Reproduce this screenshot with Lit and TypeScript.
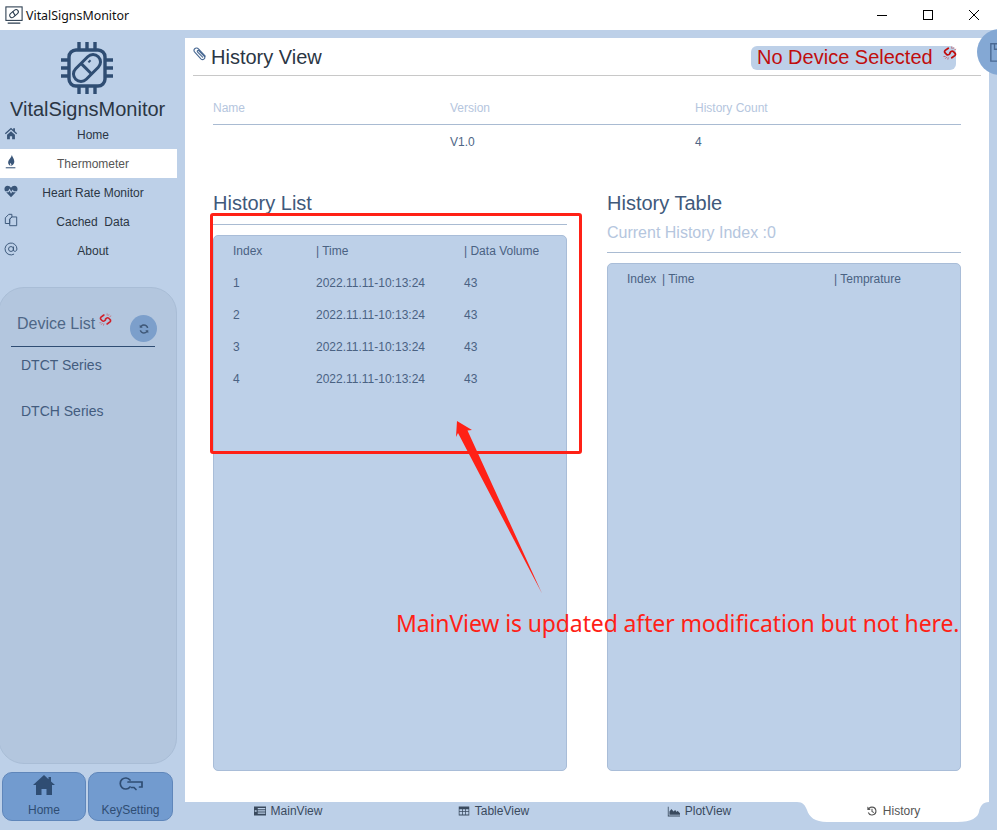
import { LitElement, css, html, svg } from 'lit';
import { customElement } from 'lit/decorators.js';

const icons = {
  home: svg`<path d="M8 2 1 8.200l1 1.100L8 4l6 5.300 1-1.100-2.500-2.200V2.500h-2v1.800zM3.500 10v5h3.200v-3.400h2.600V15h3.200v-5L8 6z"/>`,
  flame: svg`<path d="M9 0c.5 2.500 2.800 4.500 2.800 7.500 0 2.200-1.500 4.500-3.800 5 1-1.500.2-3-1.300-3.300 0 1 .4 2 .9 3.300C5.500 12 4.400 10 4.800 7.800 5.300 5 8.500 3 9 0z"/><rect x="2" y="14" width="11" height="1.200"/>`,
  heart: svg`<path d="M8 15 2.500 9.500h2.800l1-1.800 1.700 3.300 1.600-2.500.6 1h3.300zM1.300 8.300C-.5 5.500 1 2 4 2c1.800 0 3 1 4 2.200C9 3 10.200 2 12 2c3 0 4.500 3.500 2.700 6.300h-3.500l-1.300-2-1.700 2.600L6.400 5.200 4.600 8.300z"/>`,
  copy: svg`<path fill="none" stroke="currentColor" stroke-width="1.100" d="M5.500 1.500h3.500v3l-2.500 2.500v5h-5V5.500zM9 4.500h5.500v10h-8V7z"/>`,
  at: svg`<g fill="none" stroke="currentColor" stroke-width="1.100"><circle cx="8" cy="8" r="2.800"/><path d="M10.800 5.200v4c0 2.200 4 2 4-1.200A6.800 6.800 0 1 0 11.500 13.800"/></g>`,
  paperclip: svg`<path fill="none" stroke="currentColor" stroke-width="1.300" stroke-linecap="round" d="M14 10.500 6.500 2.500C5 1 3 1 2 2 1 3 1 5 2.500 6.500L9 13.500c1 1 2.800 1 3.700.1.900-.9.900-2.400 0-3.300L6.800 4.300c-.5-.5-1.200-.5-1.600-.1-.4.400-.4 1.100.1 1.600L11 11.500"/>`,
  refresh: svg`<path d="M13.800 6.500h-2C11.200 4.700 9.700 3.700 8 3.700c-1.200 0-2.200.5-3 1.200L6.300 6.200H2.300V2.200l1.400 1.400C4.800 2.500 6.300 1.800 8 1.800c2.800 0 5.200 2 5.800 4.700zM2.200 9.500h2c.6 1.800 2.100 2.800 3.800 2.800 1.200 0 2.200-.5 3-1.200L9.700 9.800h4v4l-1.400-1.400c-1.100 1.100-2.600 1.800-4.300 1.800-2.800 0-5.200-2-5.800-4.700z"/>`,
  broken: svg`<g fill="none" stroke="currentColor" stroke-width="2" stroke-linecap="round"><path d="M6 2.500 2.500 5C1.500 6 1.500 7.200 2.500 8l1.500 1.500c.8.800 2 .8 3 0l1-1"/><path d="M10 13.500 13.500 11c1-1 1-2.200 0-3L12 6.500c-.8-.8-2-.8-3 0L8 7.500"/></g><g stroke="currentColor" stroke-width=".8" opacity=".7"><path d="M10 .5v2.500M12.500 1.500 11 3.500M15 3.500 13 4.500M.5 12H3M2.500 14.500 4.500 12.500M5.500 15.500l.5-2.500"/></g>`,
  list: svg`<path d="M0 2h16v12H0zm5 2v1.500h10V4zm0 3v1.500h10V7zm0 3v1.500h10V10zM1 7v2h2.500V7z" fill-rule="evenodd"/>`,
  table: svg`<path d="M1 2h14v12H1zm1 3.500V8h3.500V5.500zm4.500 0V8h3V5.500zm4 0V8H14V5.500zM2 9v3.500h3.500V9zm4.500 0v3.500h3V9zm4 0v3.500H14V9z" fill-rule="evenodd"/>`,
  chart: svg`<path d="M1 2h1v11h14v1H1zM3 12V8l2.500-3 2.500 3 2-2 2 2.500L13 7l3 3v2z"/>`,
  history: svg`<path d="M8 2a6 6 0 1 1-5.600 8.200l1.400-.5A4.500 4.500 0 1 0 4.700 5l1.500 1.500H1.800V2l1.800 1.800A6 6 0 0 1 8 2zM7.300 5h1.400v3.200l2.200 1.300-.7 1.200-2.900-1.700z"/>`,
};

const icon = (name: keyof typeof icons, size = 16) =>
  html`<svg class="icon" width=${size} height=${size} viewBox="0 0 16 16" fill="currentColor">${icons[name]}</svg>`;

const nav = ['Home', 'Thermometer', 'Heart Rate Monitor', 'Cached  Data', 'About'];
const navIcons = ['home', 'flame', 'heart', 'copy', 'at'] as const;
const rows = [1, 2, 3, 4];

@customElement('app-root')
export class AppRoot extends LitElement {
  render() {
    return html`
      <header class="titlebar">
        <svg class="app-icon" width="18" height="18" viewBox="0 0 20 20" fill="none" stroke="#2c3e50" stroke-width="1.200">
          <rect x="1" y="1" width="18" height="15"/>
          <rect x="4.500" y="6" width="11" height="5" rx="2.500" transform="rotate(-40 10 8.500)"/>
          <path d="M8.500 6l3 5M3 19h14"/>
        </svg>
        <span class="app-name">VitalSignsMonitor</span>
        <div class="win-buttons">
          <svg width="12" height="12" viewBox="0 0 12 12" stroke="#000" fill="none"><path d="M1 6.500h10"/></svg>
          <svg width="12" height="12" viewBox="0 0 12 12" stroke="#000" fill="none"><rect x="1.500" y="1.500" width="9" height="9"/></svg>
          <svg width="12" height="12" viewBox="0 0 12 12" stroke="#000" fill="none"><path d="M1 1l10 10M11 1 1 11"/></svg>
        </div>
      </header>
      <div class="body">
        <aside class="sidebar">
          <div class="logo">
            <svg width="54" height="54" viewBox="0 0 54 54" fill="none" stroke="#2f4d73">
              <g stroke-width="3.400"><path d="M19 1v8M27 1v8M35 1v8M19 45v8M27 45v8M35 45v8M1 19h8M1 27h8M1 35h8M45 19h8M45 27h8M45 35h8"/></g>
              <rect x="9" y="9" width="36" height="36" rx="7" stroke-width="3.400"/>
              <g transform="rotate(-45 27 27)" stroke-width="3">
                <rect x="11" y="19.500" width="32" height="15" rx="7.500"/>
                <path d="M26 19.500v15"/>
                <path d="M32 24h3" stroke-width="2"/>
              </g>
            </svg>
          </div>
          <div class="brand">VitalSignsMonitor</div>
          <nav class="nav">
            ${nav.map(
              (label, i) => html`<div class="nav-item ${i === 1 ? 'active' : ''}">
                <span class="nav-icon">${icon(navIcons[i], 14)}</span>
                <span class="nav-label">${label}</span>
              </div>`,
            )}
          </nav>
          <section class="devices">
            <div class="devices-head">
              <span class="devices-title">Device List</span>
              <span class="broken-small">${icon('broken', 13)}</span>
              <span class="refresh">${icon('refresh', 12)}</span>
            </div>
            <div class="series">DTCT Series</div>
            <div class="series">DTCH Series</div>
          </section>
          <div class="bottom-buttons">
            <div class="big-btn">
              <svg width="22" height="22" viewBox="0 0 22 22" fill="#2f4d73"><path d="M11 1 0 11h3v10h5.500v-6h5v6H19V11h3l-4-3.600V3h-2.500v2.200z"/></svg>
              <span>Home</span>
            </div>
            <div class="big-btn">
              <svg width="24" height="22" viewBox="0 0 24 18" fill="none" stroke="#2f4d73" stroke-width="1.700" stroke-linecap="round"><path d="M11 4A5.500 5.500 0 1 0 11 11"/><path d="M9 6h14v5h-2.500M17 13.500l-2-2h-2.500"/></svg>
              <span>KeySetting</span>
            </div>
          </div>
        </aside>
        <div class="right">
          <main class="content">
            <div class="view-head">
              <span class="clip">${icon('paperclip', 14)}</span>
              <h1>History View</h1>
              <div class="status">
                <span>No Device Selected</span>
                <span class="broken-big">${icon('broken', 14)}</span>
              </div>
            </div>
            <div class="info">
              <div class="info-row labels"><span>Name</span><span>Version</span><span>History Count</span></div>
              <div class="info-row values"><span></span><span>V1.0</span><span>4</span></div>
            </div>
            <div class="columns">
              <section class="col">
                <h2 class="single">History List</h2>
                <div class="panel list-panel">
                  <div class="row list-row"><span>Index</span><span>| Time</span><span>| Data Volume</span></div>
                  ${rows.map((n) => html`<div class="row list-row"><span>${n}</span><span>2022.11.11-10:13:24</span><span>43</span></div>`)}
                </div>
              </section>
              <section class="col">
                <h2>History Table</h2>
                <div class="subtitle">Current History Index :0</div>
                <div class="panel table-panel">
                  <div class="row table-row"><span>Index</span><span>| Time</span><span>| Temprature</span></div>
                </div>
              </section>
            </div>
          </main>
          <div class="tabs">
            <div class="tab">${icon('list', 12)}<span>MainView</span></div>
            <div class="tab">${icon('table', 12)}<span>TableView</span></div>
            <div class="tab">${icon('chart', 13)}<span>PlotView</span></div>
            <div class="tab selected">${icon('history', 12)}<span>History</span></div>
          </div>
        </div>
        <div class="corner-btn">
          <svg width="22" height="22" viewBox="0 0 24 24" fill="none" stroke="#4a6a94" stroke-width="1.500"><path d="M2 3h14l6 6v13H2zM6 3v6h9V3"/></svg>
        </div>
      </div>
      <div class="annotation">
        <div class="red-box"></div>
        <svg class="arrow" width="100" height="190" viewBox="0 0 100 190"><path fill="#ff2116" d="M7 8 22 17 17.500 17.500 92 180.500 8 20 6 24z"/></svg>
        <div class="red-note">MainView is updated after modification but not here.</div>
      </div>
    `;
  }

  static styles = css`
    :host {
      display: block;
      position: relative;
      width: 997px;
      height: 830px;
      overflow: hidden;
      background: #bdd0e8;
      font-family: 'Liberation Sans', Arial, sans-serif;
      color: #3f5878;
    }

    .icon { display: block; flex: none; }

    .titlebar {
      display: flex;
      align-items: center;
      height: 30px;
      padding-left: 5px;
      background: #fff;
      box-sizing: border-box;
    }
    .app-icon { margin-right: 3px; }
    .app-name {
      font: 12.400px 'Noto Sans', sans-serif;
      color: #111;
    }
    .win-buttons {
      margin-left: auto;
      display: flex;
      gap: 34px;
      padding-right: 17px;
    }

    .body {
      position: relative;
      display: flex;
      height: 800px;
    }

    .sidebar {
      width: 185px;
      flex: none;
      display: flex;
      flex-direction: column;
    }
    .logo {
      display: flex;
      justify-content: center;
      padding: 11px 12px 0 0;
      height: 56px;
    }
    .brand {
      font-size: 20px;
      line-height: 24px;
      color: #2b3644;
      padding-left: 10px;
    }
    .nav { margin-top: -1px; height: 167px; }
    .nav-item {
      display: flex;
      align-items: center;
      width: 177px;
      height: 29px;
      font-size: 12px;
      color: #2b3644;
    }
    .nav-item.active { background: #fff; color: #555; }
    .nav-icon {
      width: 20px;
      padding-left: 4px;
      margin-top: -3px;
      color: #3a5679;
      box-sizing: border-box;
    }
    .nav-label {
      flex: 1;
      text-align: center;
      padding-right: 11px;
      white-space: pre;
    }

    .devices {
      width: 179px;
      height: 477px;
      margin-left: -2px;
      box-sizing: border-box;
      background: #b3c6de;
      border: 1px solid #a9bdd6;
      border-radius: 26px;
      padding: 0 0 0 12px;
    }
    .devices-head {
      display: flex;
      align-items: flex-start;
      width: 144px;
      height: 59px;
      border-bottom: 1px solid #2f4d73;
      box-sizing: border-box;
      padding: 26px 0 0 6px;
    }
    .devices-title { font-size: 16px; color: #4e6686; line-height: 20px; }
    .broken-small { color: #d0202a; margin: -1px 0 0 4px; }
    .refresh {
      display: flex;
      align-items: center;
      justify-content: center;
      width: 27px;
      height: 27px;
      border-radius: 50%;
      margin: 1px -2px 0 auto;
      background: #7c9fcb;
      color: #3f5878;
      flex: none;
    }
    .series {
      font-size: 14px;
      line-height: 16px;
      padding-left: 10px;
      margin-top: 10px;
      margin-bottom: 30px;
      color: #435c7e;
    }

    .bottom-buttons {
      display: flex;
      gap: 2px;
      padding: 8px 0 0 2px;
    }
    .big-btn {
      width: 84px;
      height: 49px;
      box-sizing: border-box;
      display: flex;
      flex-direction: column;
      align-items: center;
      justify-content: space-between;
      padding: 1px 0 3px;
      background: #729bcf;
      border: 1px solid #5f86ba;
      border-radius: 10px;
      font-size: 12px;
      color: #2f4d73;
    }
    .big-btn + .big-btn { width: 85px; }

    .right {
      flex: 1;
      display: flex;
      flex-direction: column;
      padding-top: 8px;
      min-width: 0;
    }
    .content {
      width: 804px;
      height: 764px;
      background: #fff;
      box-sizing: border-box;
      padding: 0 28px 0 8px;
    }
    .view-head {
      display: flex;
      align-items: flex-start;
      width: 788px;
      height: 38px;
      border-bottom: 1px solid #c8c8c8;
      box-sizing: border-box;
    }
    .clip { color: #4a6a94; margin: 9px 4px 0 0; }
    h1 {
      margin: 8px 0 0;
      font-size: 20px;
      line-height: 23px;
      font-weight: 400;
      color: #2b3644;
    }
    .status {
      display: flex;
      align-items: flex-start;
      margin: 8px 25px 0 auto;
      width: 205px;
      height: 24px;
      box-sizing: border-box;
      padding-left: 6px;
      background: #bdd0e8;
      border-radius: 6px;
      color: #c00d0d;
      font-size: 20px;
      line-height: 23px;
      white-space: nowrap;
    }
    .broken-big { margin-left: 10px; }

    .info { margin: 0 20px; width: 748px; }
    .info-row {
      display: grid;
      grid-template-columns: 237px 245px 1fr;
      font-size: 12px;
      box-sizing: border-box;
    }
    .labels {
      height: 49px;
      padding-top: 26px;
      color: #b5c6de;
      border-bottom: 1px solid #a9bbd2;
      line-height: 13px;
    }
    .values {
      padding-top: 10px;
      line-height: 14px;
      color: #4e6686;
    }

    .columns {
      display: grid;
      grid-template-columns: 354px 354px;
      gap: 40px;
      margin: 42px 0 0 20px;
    }
    h2 {
      margin: 0;
      font-size: 20px;
      line-height: 24px;
      font-weight: 400;
      color: #40597b;
    }
    h2.single {
      height: 34px;
      border-bottom: 1px solid #a9bbd2;
      box-sizing: border-box;
    }
    .subtitle {
      font-size: 16px;
      line-height: 20px;
      height: 20px;
      padding: 8px 0 9px;
      color: #b5c6de;
      border-bottom: 1px solid #a9bbd2;
    }
    .panel {
      box-sizing: border-box;
      background: #bdd0e8;
      border: 1px solid #a9bdd8;
      border-radius: 5px;
      margin-top: 10px;
    }
    .list-panel { height: 536px; padding-top: 0; }
    .list-panel .row:first-child { margin-top: -1px; }
    .table-panel { height: 508px; }
    .row {
      display: grid;
      font-size: 12px;
      line-height: 32px;
      height: 32px;
      color: #4a6283;
    }
    .list-row {
      grid-template-columns: 83px 148px 1fr;
      padding-left: 19px;
    }
    .table-row {
      grid-template-columns: 35px 172px 1fr;
      padding-left: 19px;
      line-height: 30px;
    }

    .tabs {
      display: grid;
      grid-template-columns: 206px 205px 206px 187px;
      height: 28px;
      width: 804px;
    }
    .tab {
      display: flex;
      align-items: center;
      justify-content: center;
      gap: 5px;
      height: 20px;
      padding-bottom: 2px;
      box-sizing: border-box;
      font-size: 12px;
      color: #3a4a5e;
    }
    .tab.selected {
      margin-left: -5px;
      background: #fff;
      color: #555;
      clip-path: path('M0 0C6 0 8 3 10 8C12 15 18 20 30 20H160C175 20 181 15 182 10C183 4 186 0 192 0Z');
    }

    .corner-btn {
      position: absolute;
      top: -1px;
      right: -26px;
      width: 46px;
      height: 46px;
      border-radius: 50%;
      background: #84a8d4;
      display: flex;
      align-items: center;
      padding-left: 12px;
      box-sizing: border-box;
    }

    .annotation { position: absolute; inset: 0; pointer-events: none; }
    .red-box {
      position: absolute;
      left: 210px;
      top: 213px;
      width: 372px;
      height: 241px;
      box-sizing: border-box;
      border: 3px solid #ff2116;
      border-radius: 3px;
    }
    .arrow { position: absolute; left: 450px; top: 413px; }
    .red-note {
      position: absolute;
      left: 396px;
      top: 608px;
      font: 23px/30px 'Noto Sans', sans-serif;
      letter-spacing: -0.120px;
      color: #ff2116;
      white-space: nowrap;
    }
  `;
}

declare global {
  interface HTMLElementTagNameMap {
    'app-root': AppRoot;
  }
}
